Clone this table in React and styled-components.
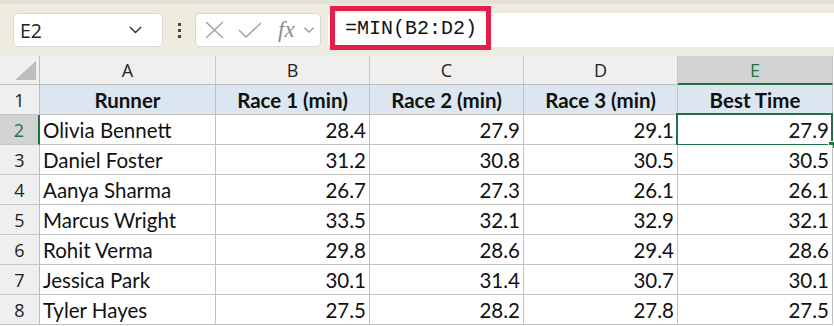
import React from "react";
import styled, { createGlobalStyle } from "styled-components";

const GlobalStyle = createGlobalStyle`
  html, body {
    margin: 0;
    padding: 0;
    background: #ffffff;
  }
  body {
    font-family: "Lato", "Liberation Sans", sans-serif;
    overflow: hidden;
  }
`;

const GREEN = "#217346";

const Toolbar = styled.div`
  height: 56px;
  box-sizing: border-box;
  background: #eeecdf;
  border-top: 4px solid #e4e2d6;
  display: flex;
  align-items: center;
  padding-left: 13px;
`;

const NameBox = styled.div`
  width: 150px;
  height: 34px;
  box-sizing: border-box;
  background: #fff;
  border: 1px solid #dcdad0;
  border-radius: 5px;
  display: flex;
  align-items: center;
  justify-content: space-between;
  padding: 0 19px 0 6px;
  font-family: "Open Sans", "Noto Sans", sans-serif;
  font-size: 19.5px;
  color: #222;
`;

const Dots = styled.div`
  width: 32px;
  display: flex;
  flex-direction: column;
  align-items: center;
  gap: 3px;
`;

const Dot = styled.span`
  width: 3px;
  height: 3px;
  background: #444;
`;

const FuncBox = styled.div`
  width: 126px;
  height: 34px;
  box-sizing: border-box;
  background: #fff;
  border: 1px solid #dcdad0;
  border-radius: 5px;
  display: flex;
  align-items: center;
  padding-left: 9px;
  gap: 14px;
`;

const Fx = styled.span`
  font-family: "Liberation Serif", "DejaVu Serif", serif;
  font-style: italic;
  font-size: 23px;
  color: #8c8c8c;
  margin-left: 2px;
  margin-right: -6px;
`;

const FormulaBar = styled.div`
  flex: 1;
  height: 34px;
  margin-left: 7px;
  box-sizing: border-box;
  background: #fff;
  border-radius: 5px 0 0 5px;
  display: flex;
  align-items: center;
  padding-left: 2px;
`;

const Highlight = styled.div`
  height: 44px;
  width: 161px;
  box-sizing: border-box;
  border: 5px solid #e21f4c;
  display: flex;
  align-items: center;
  padding-left: 10px;
  margin-top: -4px;
  font-family: "Liberation Mono", "DejaVu Sans Mono", monospace;
  font-size: 20px;
  color: #111;
`;

const Sheet = styled.div`
  display: grid;
  grid-template-columns: 40px 176px 154px 154px 154px 155px;
  grid-template-rows: 29px repeat(8, 30px);
`;

const Corner = styled.div`
  background: #efefef;
  border-right: 1px solid #bdbdbd;
  border-bottom: 1px solid #bdbdbd;
  box-sizing: border-box;
  display: flex;
  align-items: flex-end;
  justify-content: flex-end;
  padding: 0 3px 4px 0;
`;

const ColHead = styled.div`
  box-sizing: border-box;
  background: ${(p) => (p.$active ? "#d2d2d2" : "#efefef")};
  border-right: 1px solid #c6c6c6;
  border-bottom: ${(p) => (p.$active ? `2px solid ${GREEN}` : "1px solid #bdbdbd")};
  display: flex;
  align-items: center;
  justify-content: center;
  font-family: "Open Sans", "Noto Sans", sans-serif;
  font-size: 18px;
  color: ${(p) => (p.$active ? GREEN : "#222")};
`;

const RowHead = styled.div`
  box-sizing: border-box;
  background: ${(p) => (p.$active ? "#d2d2d2" : "#efefef")};
  border-right: ${(p) => (p.$active ? `2px solid ${GREEN}` : "1px solid #bdbdbd")};
  border-bottom: 1px solid #c6c6c6;
  display: flex;
  align-items: center;
  justify-content: center;
  font-family: "Open Sans", "Noto Sans", sans-serif;
  font-size: 18px;
  color: ${(p) => (p.$active ? GREEN : "#222")};
`;

const Cell = styled.div`
  position: relative;
  box-sizing: border-box;
  background: ${(p) => (p.$header ? "#dce6f1" : "#fff")};
  border-right: 1px solid #c2c2c2;
  border-bottom: 1px solid #c2c2c2;
  display: flex;
  align-items: center;
  justify-content: ${(p) => (p.$header ? "center" : p.$num ? "flex-end" : "flex-start")};
  padding: 0 3px 0 3px;
  font-family: "Lato", "Liberation Sans", sans-serif;
  font-size: 20.5px;
  font-weight: ${(p) => (p.$header ? 700 : 400)};
  color: #111;
  white-space: nowrap;
`;

const Selection = styled.div`
  position: absolute;
  top: -2px;
  left: -2px;
  right: -1px;
  bottom: -2px;
  border: 2px solid ${GREEN};
  pointer-events: none;
`;

const Handle = styled.div`
  position: absolute;
  right: -5px;
  bottom: -5px;
  width: 6px;
  height: 6px;
  background: ${GREEN};
  border: 1px solid #fff;
`;

const columns = ["A", "B", "C", "D", "E"];
const headers = ["Runner", "Race 1 (min)", "Race 2 (min)", "Race 3 (min)", "Best Time"];

const runners = [
  ["Olivia Bennett", "28.4", "27.9", "29.1", "27.9"],
  ["Daniel Foster", "31.2", "30.8", "30.5", "30.5"],
  ["Aanya Sharma", "26.7", "27.3", "26.1", "26.1"],
  ["Marcus Wright", "33.5", "32.1", "32.9", "32.1"],
  ["Rohit Verma", "29.8", "28.6", "29.4", "28.6"],
  ["Jessica Park", "30.1", "31.4", "30.7", "30.1"],
  ["Tyler Hayes", "27.5", "28.2", "27.8", "27.5"],
];

function Chevron({ size = 16, color = "#333", width = 1.6 }) {
  return (
    <svg width={size} height={size / 2 + 2} viewBox="0 0 16 10">
      <polyline points="2,2 8,8 14,2" fill="none" stroke={color} strokeWidth={width} />
    </svg>
  );
}

function App() {
  return (
    <>
      <GlobalStyle />
      <Toolbar>
        <NameBox>
          <span>E2</span>
          <Chevron size={15} color="#333" width={1.6} />
        </NameBox>
        <Dots>
          <Dot />
          <Dot />
          <Dot />
        </Dots>
        <FuncBox>
          <svg width="19" height="18" viewBox="0 0 19 18">
            <path d="M1 1 L18 17 M18 1 L1 17" stroke="#a6a6a6" strokeWidth="1.6" fill="none" />
          </svg>
          <svg width="24" height="16" viewBox="0 0 24 16">
            <polyline points="1,8 8,15 23,1" stroke="#a6a6a6" strokeWidth="1.6" fill="none" />
          </svg>
          <Fx>fx</Fx>
          <Chevron size={12} color="#8c8c8c" width={1.5} />
        </FuncBox>
        <FormulaBar>
          <Highlight>=MIN(B2:D2)</Highlight>
        </FormulaBar>
      </Toolbar>
      <Sheet>
        <Corner>
          <svg width="21" height="19" viewBox="0 0 21 19">
            <polygon points="21,0 21,19 0,19" fill="#bdbdbd" />
          </svg>
        </Corner>
        {columns.map((c) => (
          <ColHead key={c} $active={c === "E"}>
            {c}
          </ColHead>
        ))}
        <RowHead>1</RowHead>
        {headers.map((h) => (
          <Cell key={h} $header>
            {h}
          </Cell>
        ))}
        {runners.map((row, i) => (
          <React.Fragment key={row[0]}>
            <RowHead $active={i === 0}>{i + 2}</RowHead>
            {row.map((v, j) => (
              <Cell key={j} $num={j > 0}>
                {v}
                {i === 0 && j === 4 && (
                  <Selection>
                    <Handle />
                  </Selection>
                )}
              </Cell>
            ))}
          </React.Fragment>
        ))}
      </Sheet>
    </>
  );
}

export default App;
